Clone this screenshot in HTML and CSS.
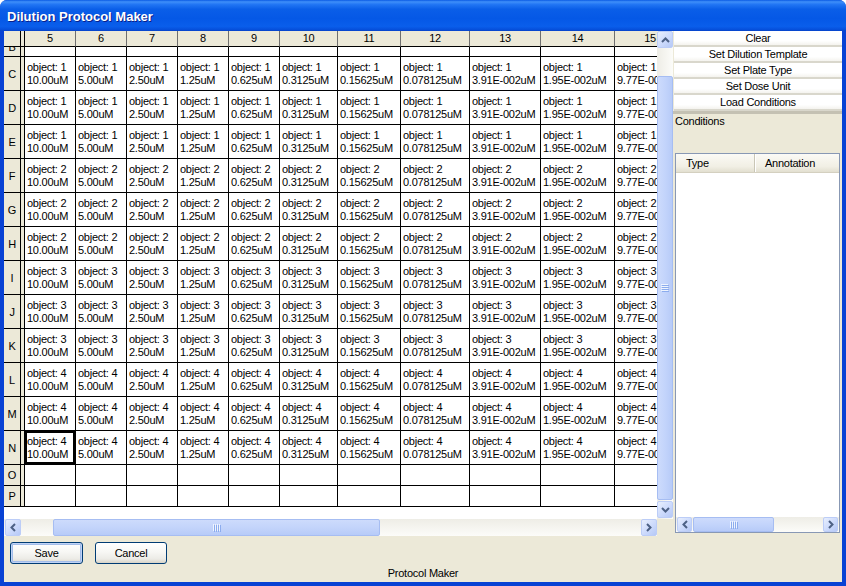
FILE: index.html
```html
<!DOCTYPE html>
<html>
<head>
<meta charset="utf-8">
<title>Dilution Protocol Maker</title>
<link rel="stylesheet" href="styles.css">
</head>
<body>
<div class="window">
  <div class="titlebar"><span class="title">Dilution Protocol Maker</span></div>
  <div class="frame">
    <div class="main">
      <div class="gridarea">
        <div class="viewport">
          <div class="row head"><div class="rh"></div><div class="sep"></div><div class="hc">5</div><div class="hc">6</div><div class="hc">7</div><div class="hc">8</div><div class="hc">9</div><div class="hc">10</div><div class="hc">11</div><div class="hc">12</div><div class="hc">13</div><div class="hc">14</div><div class="hc">15</div></div>
          <div class="row rpart"><div class="rh"><span class="cut">B</span></div><div class="sep"></div><div class="cell"></div><div class="cell"></div><div class="cell"></div><div class="cell"></div><div class="cell"></div><div class="cell"></div><div class="cell"></div><div class="cell"></div><div class="cell"></div><div class="cell"></div><div class="cell"></div></div>
          <div class="row r34"><div class="rh">C</div><div class="sep"></div><div class="cell">object: 1<br>10.00uM</div><div class="cell">object: 1<br>5.00uM</div><div class="cell">object: 1<br>2.50uM</div><div class="cell">object: 1<br>1.25uM</div><div class="cell">object: 1<br>0.625uM</div><div class="cell">object: 1<br>0.3125uM</div><div class="cell">object: 1<br>0.15625uM</div><div class="cell">object: 1<br>0.078125uM</div><div class="cell">object: 1<br>3.91E-002uM</div><div class="cell">object: 1<br>1.95E-002uM</div><div class="cell">object: 1<br>9.77E-003uM</div></div>
          <div class="row r34"><div class="rh">D</div><div class="sep"></div><div class="cell">object: 1<br>10.00uM</div><div class="cell">object: 1<br>5.00uM</div><div class="cell">object: 1<br>2.50uM</div><div class="cell">object: 1<br>1.25uM</div><div class="cell">object: 1<br>0.625uM</div><div class="cell">object: 1<br>0.3125uM</div><div class="cell">object: 1<br>0.15625uM</div><div class="cell">object: 1<br>0.078125uM</div><div class="cell">object: 1<br>3.91E-002uM</div><div class="cell">object: 1<br>1.95E-002uM</div><div class="cell">object: 1<br>9.77E-003uM</div></div>
          <div class="row r34"><div class="rh">E</div><div class="sep"></div><div class="cell">object: 1<br>10.00uM</div><div class="cell">object: 1<br>5.00uM</div><div class="cell">object: 1<br>2.50uM</div><div class="cell">object: 1<br>1.25uM</div><div class="cell">object: 1<br>0.625uM</div><div class="cell">object: 1<br>0.3125uM</div><div class="cell">object: 1<br>0.15625uM</div><div class="cell">object: 1<br>0.078125uM</div><div class="cell">object: 1<br>3.91E-002uM</div><div class="cell">object: 1<br>1.95E-002uM</div><div class="cell">object: 1<br>9.77E-003uM</div></div>
          <div class="row r34"><div class="rh">F</div><div class="sep"></div><div class="cell">object: 2<br>10.00uM</div><div class="cell">object: 2<br>5.00uM</div><div class="cell">object: 2<br>2.50uM</div><div class="cell">object: 2<br>1.25uM</div><div class="cell">object: 2<br>0.625uM</div><div class="cell">object: 2<br>0.3125uM</div><div class="cell">object: 2<br>0.15625uM</div><div class="cell">object: 2<br>0.078125uM</div><div class="cell">object: 2<br>3.91E-002uM</div><div class="cell">object: 2<br>1.95E-002uM</div><div class="cell">object: 2<br>9.77E-003uM</div></div>
          <div class="row r34"><div class="rh">G</div><div class="sep"></div><div class="cell">object: 2<br>10.00uM</div><div class="cell">object: 2<br>5.00uM</div><div class="cell">object: 2<br>2.50uM</div><div class="cell">object: 2<br>1.25uM</div><div class="cell">object: 2<br>0.625uM</div><div class="cell">object: 2<br>0.3125uM</div><div class="cell">object: 2<br>0.15625uM</div><div class="cell">object: 2<br>0.078125uM</div><div class="cell">object: 2<br>3.91E-002uM</div><div class="cell">object: 2<br>1.95E-002uM</div><div class="cell">object: 2<br>9.77E-003uM</div></div>
          <div class="row r34"><div class="rh">H</div><div class="sep"></div><div class="cell">object: 2<br>10.00uM</div><div class="cell">object: 2<br>5.00uM</div><div class="cell">object: 2<br>2.50uM</div><div class="cell">object: 2<br>1.25uM</div><div class="cell">object: 2<br>0.625uM</div><div class="cell">object: 2<br>0.3125uM</div><div class="cell">object: 2<br>0.15625uM</div><div class="cell">object: 2<br>0.078125uM</div><div class="cell">object: 2<br>3.91E-002uM</div><div class="cell">object: 2<br>1.95E-002uM</div><div class="cell">object: 2<br>9.77E-003uM</div></div>
          <div class="row r34"><div class="rh">I</div><div class="sep"></div><div class="cell">object: 3<br>10.00uM</div><div class="cell">object: 3<br>5.00uM</div><div class="cell">object: 3<br>2.50uM</div><div class="cell">object: 3<br>1.25uM</div><div class="cell">object: 3<br>0.625uM</div><div class="cell">object: 3<br>0.3125uM</div><div class="cell">object: 3<br>0.15625uM</div><div class="cell">object: 3<br>0.078125uM</div><div class="cell">object: 3<br>3.91E-002uM</div><div class="cell">object: 3<br>1.95E-002uM</div><div class="cell">object: 3<br>9.77E-003uM</div></div>
          <div class="row r34"><div class="rh">J</div><div class="sep"></div><div class="cell">object: 3<br>10.00uM</div><div class="cell">object: 3<br>5.00uM</div><div class="cell">object: 3<br>2.50uM</div><div class="cell">object: 3<br>1.25uM</div><div class="cell">object: 3<br>0.625uM</div><div class="cell">object: 3<br>0.3125uM</div><div class="cell">object: 3<br>0.15625uM</div><div class="cell">object: 3<br>0.078125uM</div><div class="cell">object: 3<br>3.91E-002uM</div><div class="cell">object: 3<br>1.95E-002uM</div><div class="cell">object: 3<br>9.77E-003uM</div></div>
          <div class="row r34"><div class="rh">K</div><div class="sep"></div><div class="cell">object: 3<br>10.00uM</div><div class="cell">object: 3<br>5.00uM</div><div class="cell">object: 3<br>2.50uM</div><div class="cell">object: 3<br>1.25uM</div><div class="cell">object: 3<br>0.625uM</div><div class="cell">object: 3<br>0.3125uM</div><div class="cell">object: 3<br>0.15625uM</div><div class="cell">object: 3<br>0.078125uM</div><div class="cell">object: 3<br>3.91E-002uM</div><div class="cell">object: 3<br>1.95E-002uM</div><div class="cell">object: 3<br>9.77E-003uM</div></div>
          <div class="row r34"><div class="rh">L</div><div class="sep"></div><div class="cell">object: 4<br>10.00uM</div><div class="cell">object: 4<br>5.00uM</div><div class="cell">object: 4<br>2.50uM</div><div class="cell">object: 4<br>1.25uM</div><div class="cell">object: 4<br>0.625uM</div><div class="cell">object: 4<br>0.3125uM</div><div class="cell">object: 4<br>0.15625uM</div><div class="cell">object: 4<br>0.078125uM</div><div class="cell">object: 4<br>3.91E-002uM</div><div class="cell">object: 4<br>1.95E-002uM</div><div class="cell">object: 4<br>9.77E-003uM</div></div>
          <div class="row r34"><div class="rh">M</div><div class="sep"></div><div class="cell">object: 4<br>10.00uM</div><div class="cell">object: 4<br>5.00uM</div><div class="cell">object: 4<br>2.50uM</div><div class="cell">object: 4<br>1.25uM</div><div class="cell">object: 4<br>0.625uM</div><div class="cell">object: 4<br>0.3125uM</div><div class="cell">object: 4<br>0.15625uM</div><div class="cell">object: 4<br>0.078125uM</div><div class="cell">object: 4<br>3.91E-002uM</div><div class="cell">object: 4<br>1.95E-002uM</div><div class="cell">object: 4<br>9.77E-003uM</div></div>
          <div class="row r34"><div class="rh">N</div><div class="sep"></div><div class="cell sel">object: 4<br>10.00uM</div><div class="cell">object: 4<br>5.00uM</div><div class="cell">object: 4<br>2.50uM</div><div class="cell">object: 4<br>1.25uM</div><div class="cell">object: 4<br>0.625uM</div><div class="cell">object: 4<br>0.3125uM</div><div class="cell">object: 4<br>0.15625uM</div><div class="cell">object: 4<br>0.078125uM</div><div class="cell">object: 4<br>3.91E-002uM</div><div class="cell">object: 4<br>1.95E-002uM</div><div class="cell">object: 4<br>9.77E-003uM</div></div>
          <div class="row r21"><div class="rh">O</div><div class="sep"></div><div class="cell"></div><div class="cell"></div><div class="cell"></div><div class="cell"></div><div class="cell"></div><div class="cell"></div><div class="cell"></div><div class="cell"></div><div class="cell"></div><div class="cell"></div><div class="cell"></div></div>
          <div class="row r21"><div class="rh">P</div><div class="sep"></div><div class="cell"></div><div class="cell"></div><div class="cell"></div><div class="cell"></div><div class="cell"></div><div class="cell"></div><div class="cell"></div><div class="cell"></div><div class="cell"></div><div class="cell"></div><div class="cell"></div></div>
        </div>
        <div class="vscroll">
          <div class="sb-btn vbtn"><svg width="9" height="6" viewBox="0 0 9 6"><path d="M1 5 L4.5 1.5 L8 5" fill="none" stroke="#4d6185" stroke-width="2"/></svg></div>
          <div class="vgap-top"></div>
          <div class="thumb vthumb"><svg width="8" height="8" viewBox="0 0 8 8"><path d="M0 0.5H7M0 2.5H7M0 4.5H7M0 6.5H7" stroke="#eef4fe" stroke-width="1"/><path d="M1 1.5H8M1 3.5H8M1 5.5H8M1 7.5H8" stroke="#8cacee" stroke-width="1"/></svg></div>
          <div class="vgap-bot"></div>
          <div class="sb-btn vbtn"><svg width="9" height="6" viewBox="0 0 9 6"><path d="M1 1 L4.5 4.5 L8 1" fill="none" stroke="#4d6185" stroke-width="2"/></svg></div>
        </div>
        <div class="hscroll">
          <div class="sb-btn hbtn"><svg width="6" height="9" viewBox="0 0 6 9"><path d="M5 1 L1.5 4.5 L5 8" fill="none" stroke="#4d6185" stroke-width="2"/></svg></div>
          <div class="htrack-a"></div>
          <div class="thumb hthumb"><svg width="8" height="8" viewBox="0 0 8 8"><path d="M0.5 0V7M2.5 0V7M4.5 0V7M6.5 0V7" stroke="#eef4fe" stroke-width="1"/><path d="M1.5 1V8M3.5 1V8M5.5 1V8M7.5 1V8" stroke="#8cacee" stroke-width="1"/></svg></div>
          <div class="htrack-b"></div>
          <div class="sb-btn hbtn"><svg width="6" height="9" viewBox="0 0 6 9"><path d="M1 1 L4.5 4.5 L1 8" fill="none" stroke="#4d6185" stroke-width="2"/></svg></div>
        </div>
        <div class="corner"></div>
      </div>
      <div class="side">
        <div class="sbtn">Clear</div>
        <div class="sbtn">Set Dilution Template</div>
        <div class="sbtn">Set Plate Type</div>
        <div class="sbtn">Set Dose Unit</div>
        <div class="sbtn">Load Conditions</div>
        <div class="split"></div>
        <div class="cond-label">Conditions</div>
        <div class="list">
          <div class="lh"><div class="lcol1">Type</div><div class="lcol2">Annotation</div></div>
          <div class="lbody"></div>
          <div class="lscroll">
            <div class="sb-btn lbtn"><svg width="6" height="9" viewBox="0 0 6 9"><path d="M5 1 L1.5 4.5 L5 8" fill="none" stroke="#4d6185" stroke-width="2"/></svg></div>
            <div class="thumb lthumb"><svg width="8" height="8" viewBox="0 0 8 8"><path d="M0.5 0V7M2.5 0V7M4.5 0V7M6.5 0V7" stroke="#eef4fe" stroke-width="1"/><path d="M1.5 1V8M3.5 1V8M5.5 1V8M7.5 1V8" stroke="#8cacee" stroke-width="1"/></svg></div>
            <div class="ltrack"></div>
            <div class="sb-btn lbtn"><svg width="6" height="9" viewBox="0 0 6 9"><path d="M1 1 L4.5 4.5 L1 8" fill="none" stroke="#4d6185" stroke-width="2"/></svg></div>
          </div>
        </div>
      </div>
    </div>
    <div class="bottom">
      <div class="btnrow">
        <button class="xpbtn default">Save</button>
        <button class="xpbtn cancel">Cancel</button>
      </div>
      <div class="status">Protocol Maker</div>
    </div>
  </div>
</div>
</body>
</html>
```

FILE: styles.css
```css
html, body {
  margin: 0;
  padding: 0;
}
body {
  width: 846px;
  height: 586px;
  overflow: hidden;
  font-family: "Liberation Sans", Arial, sans-serif;
  font-size: 11px;
  letter-spacing: -0.25px;
  color: #000;
  background: #fff;
}
.window {
  width: 846px;
  height: 586px;
  display: flex;
  flex-direction: column;
  background: #0842d4;
  border-radius: 7px 7px 0 0;
  overflow: hidden;
}
.titlebar {
  flex: none;
  height: 31px;
  box-sizing: border-box;
  padding: 2px 0 0 7px;
  display: flex;
  align-items: center;
  background: linear-gradient(to bottom, #0a5ae4 0%, #3f8ff9 6%, #2276f4 14%, #0a5ee8 30%, #0558e6 60%, #0a5eeb 85%, #0650dc 95%, #0742c8 100%);
}
.title {
  color: #fff;
  font-weight: bold;
  font-size: 13px;
  letter-spacing: 0;
  text-shadow: 1px 1px 0 #0a1f8a;
}
.frame {
  flex: 1;
  display: flex;
  flex-direction: column;
  margin: 0 4px 4px 4px;
  background: #ece9d8;
}
.main {
  display: flex;
  height: 505px;
  flex: none;
}
.gridarea {
  display: grid;
  grid-template-columns: 653px 16px;
  grid-template-rows: 488px 17px;
}
.viewport {
  overflow: hidden;
  background: #fff;
}
.row {
  display: flex;
  width: max-content;
}
.row > div {
  flex: none;
  box-sizing: border-box;
  border-bottom: 1px solid #000;
}
.row > :nth-child(n+3) { width: 51px; }
.row > :nth-child(8) { width: 58px; }
.row > :nth-child(9) { width: 63px; }
.row > :nth-child(10) { width: 69px; }
.row > :nth-child(11) { width: 71px; }
.row > :nth-child(12) { width: 74px; }
.row > :nth-child(13) { width: 71px; }

.head { height: 16px; }
.rpart { height: 10px; }
.r34 { height: 34px; }
.r21 { height: 21px; }

.rh {
  width: 17px;
  background: #ece9d8;
  border-right: 1px solid #000;
  display: flex;
  align-items: center;
  justify-content: center;
  overflow: hidden;
}
.rpart .rh {
  align-items: flex-start;
}
.cut {
  display: block;
  line-height: 13px;
  margin-top: -6px;
}
.sep {
  width: 4px;
  background: #ece9d8;
  border-right: 1px solid #000;
}
.hc {
  background: #ece9d8;
  border-right: 1px solid #6f6f6f;
  text-align: center;
  line-height: 15px;
}
.cell {
  border-right: 1px solid #000;
  padding: 4px 0 0 2px;
  line-height: 13px;
  white-space: nowrap;
  overflow: hidden;
}
.cell.sel {
  box-shadow: inset 0 0 0 2px #000;
}

/* XP scrollbar pieces */
.sb-btn {
  box-sizing: border-box;
  border: 1px solid #bccdf7;
  border-radius: 2px;
  background: linear-gradient(135deg, #e8effd 0%, #ccdafc 55%, #b6c9f6 100%);
  display: flex;
  align-items: center;
  justify-content: center;
  flex: none;
}
.thumb {
  box-sizing: border-box;
  border: 1px solid #a6bdf2;
  border-radius: 2px;
  display: flex;
  align-items: center;
  justify-content: center;
  flex: none;
}
.vscroll {
  display: flex;
  flex-direction: column;
  background: linear-gradient(to right, #eeede6, #fcfcf9);
}
.vbtn { height: 17px; width: 16px; }
.vgap-top { height: 28px; flex: none; }
.vthumb {
  height: 424px;
  background: linear-gradient(to right, #cddbfc 0%, #c3d4fb 50%, #b7cbf8 100%);
}
.vgap-bot { height: 1px; flex: none; }
.vscroll .vbtn:last-child { margin-bottom: 1px; }

.hscroll {
  display: flex;
  padding-left: 1px;
  background: linear-gradient(to bottom, #eeede6, #fcfcf9);
}
.hbtn { width: 16px; height: 17px; }
.htrack-a { width: 32px; flex: none; }
.hthumb {
  width: 327px;
  height: 17px;
  background: linear-gradient(to bottom, #cddbfc 0%, #c3d4fb 50%, #b7cbf8 100%);
}
.htrack-b { flex: 1; }
.corner { background: #ece9d8; }

/* side panel */
.side {
  width: 169px;
  display: flex;
  flex-direction: column;
}
.sbtn {
  height: 16px;
  box-sizing: border-box;
  margin-left: 1px;
  background: linear-gradient(to bottom, #ffffff 0%, #ffffff 70%, #f4f3ee 100%);
  border-bottom: 2px solid #d9d7cc;
  text-align: center;
  line-height: 14px;
  flex: none;
}
.split {
  height: 3px;
  background: #c4c1b3;
  flex: none;
}
.cond-label {
  height: 39px;
  box-sizing: border-box;
  padding: 1px 0 0 2px;
  line-height: 13px;
  flex: none;
}
.list {
  flex: 1;
  margin: 0 2px 3px 2px;
  border: 1px solid #8898b4;
  background: #fff;
  display: flex;
  flex-direction: column;
}
.lh {
  display: flex;
  height: 19px;
  box-sizing: border-box;
  background: linear-gradient(to bottom, #fbfaf6 0%, #f1efe4 70%, #e2dfd0 100%);
  border-bottom: 1px solid #d4d0c0;
  line-height: 18px;
  flex: none;
}
.lcol1 {
  width: 79px;
  box-sizing: border-box;
  padding-left: 10px;
  border-right: 1px solid #c9c6b6;
  box-shadow: 1px 0 0 #fff;
}
.lcol2 {
  padding-left: 10px;
}
.lbody { flex: 1; }
.lscroll {
  display: flex;
  height: 15px;
  padding-left: 1px;
  background: linear-gradient(to bottom, #eeede6, #fcfcf9);
  flex: none;
}
.lbtn { width: 15px; height: 15px; }
.lthumb {
  width: 81px;
  height: 15px;
  margin-left: 1px;
  background: linear-gradient(to bottom, #cddbfc 0%, #c3d4fb 50%, #b7cbf8 100%);
}
.ltrack { flex: 1; }
.lscroll .lbtn:last-child { margin-right: 1px; }

/* bottom */
.bottom {
  flex: 1;
  display: flex;
  flex-direction: column;
}
.btnrow {
  display: flex;
  gap: 12px;
  padding: 6px 0 0 6px;
}
.xpbtn {
  height: 22px;
  width: 73px;
  box-sizing: border-box;
  border: 1px solid #003c74;
  border-radius: 3px;
  background: linear-gradient(to bottom, #ffffff 0%, #f7f7f4 45%, #ecebe6 80%, #d8d4c8 100%);
  font-family: "Liberation Sans", Arial, sans-serif;
  font-size: 11px;
  letter-spacing: -0.25px;
  color: #000;
  padding: 0;
}
.xpbtn.default {
  box-shadow: inset 0 0 0 1px #c0d3f5, inset 0 0 0 2px #a2bce9;
}
.xpbtn.cancel { width: 72px; }
.status {
  text-align: center;
  line-height: 13px;
  margin-top: 3px;
}
```
